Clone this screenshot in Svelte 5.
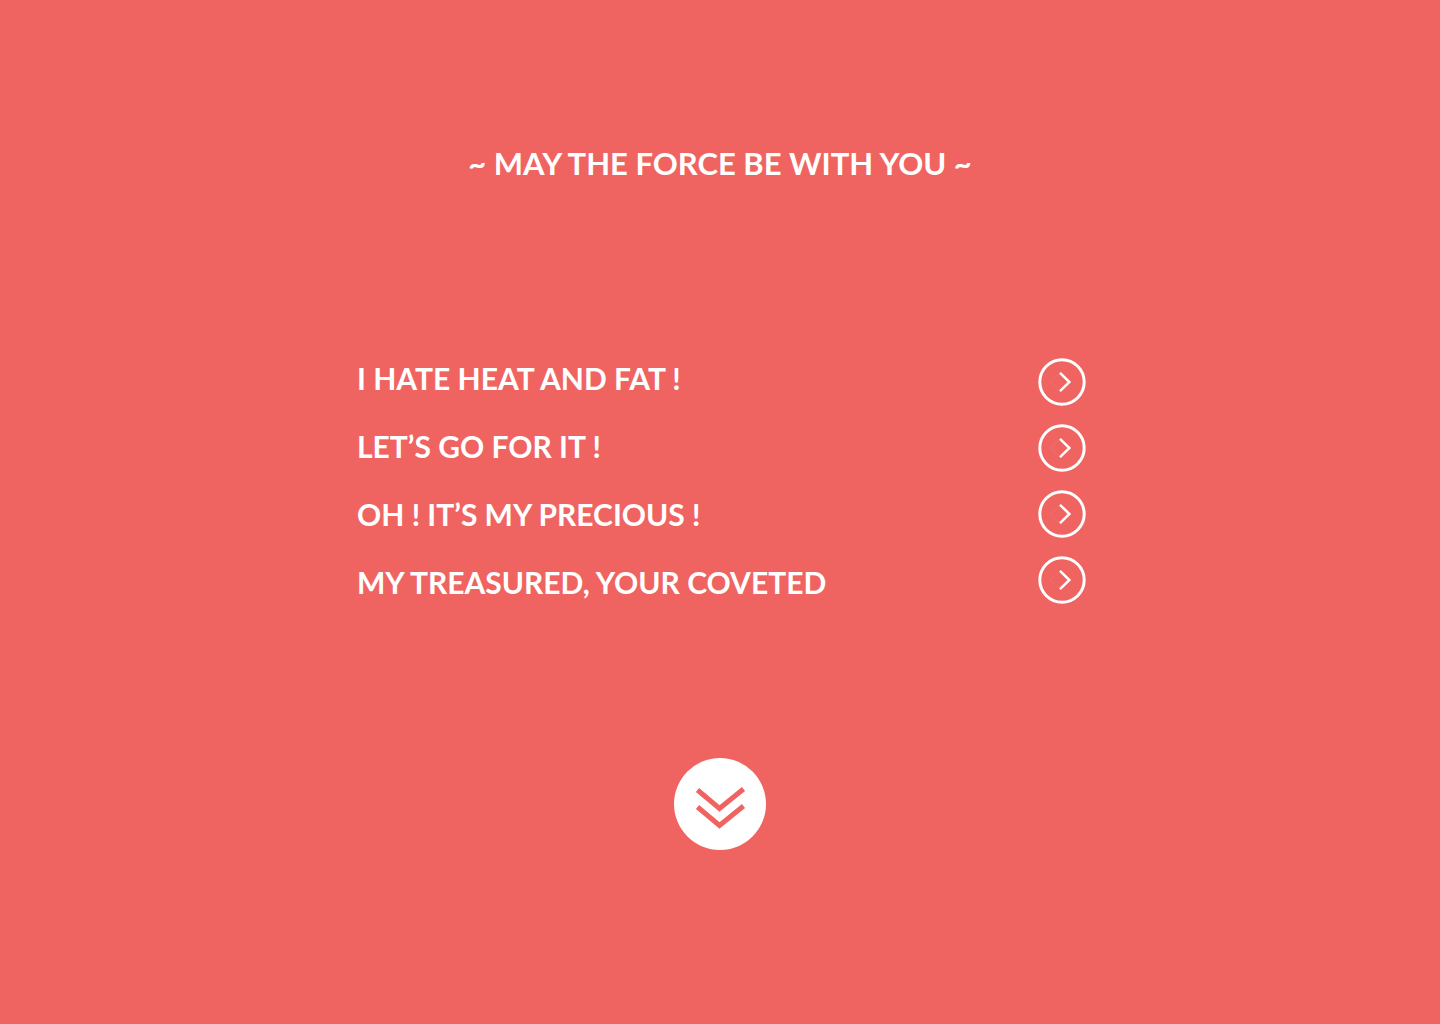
<script>
  const phrases = [
    'I HATE HEAT AND FAT !',
    'LET’S GO FOR IT !',
    'OH ! IT’S MY PRECIOUS !',
    'MY TREASURED, YOUR COVETED'
  ];
</script>

<main>
  <h1>~ MAY THE FORCE BE WITH YOU ~</h1>
  <section>
    <ul class="phrases">
      {#each phrases as phrase, i}
        <li id="phrase-{i}">{phrase}</li>
      {/each}
    </ul>
    <ul class="actions">
      {#each phrases as phrase, i}
        <li>
          <button class="go" aria-labelledby="phrase-{i}">
            <svg viewBox="0 0 48 48" aria-hidden="true">
              <circle cx="24" cy="24" r="22.2" />
              <path class="faint" d="M22 14.5L12.500 24l9.500 9.500" />
              <path class="arrow" d="M22 14.800l9.400 9.200-9.400 9.200" />
            </svg>
          </button>
        </li>
      {/each}
    </ul>
  </section>
  <button class="down" aria-label="Scroll down">
    <svg viewBox="0 0 92 92" aria-hidden="true">
      <path d="M23.500 32l22 18.500 24-19.500M23.500 49l22 18.500 24-19.500" />
    </svg>
  </button>
</main>

<style>
  :global(body) {
    margin: 0;
    background: #ef6461;
  }
  main {
    box-sizing: border-box;
    min-height: 100vh;
    padding: 143px 24px;
    display: flex;
    flex-direction: column;
    align-items: center;
    color: #fff;
    font-family: Lato, sans-serif;
    font-weight: 700;
    font-size: 30px;
    line-height: 40px;
  }
  h1 {
    margin: 0;
    font: inherit;
    font-size: 31px;
  }
  section {
    box-sizing: border-box;
    width: 100%;
    max-width: 732px;
    margin: 175px 0 154px;
    padding-left: 3px;
    display: flex;
    justify-content: space-between;
  }
  ul {
    margin: 0;
    padding: 0;
    list-style: none;
    display: flex;
    flex-direction: column;
  }
  .phrases {
    gap: 28px;
  }
  .actions {
    gap: 18px;
  }
  button {
    display: block;
    padding: 0;
    border: 0;
    border-radius: 50%;
    flex: none;
    cursor: pointer;
  }
  svg {
    display: block;
    width: 100%;
    height: 100%;
    fill: none;
  }
  .go {
    width: 48px;
    height: 48px;
    background: none;
    color: #fff;
  }
  .go svg {
    stroke: currentColor;
    stroke-width: 3;
  }
  .go .arrow {
    stroke-width: 2.5;
  }
  .go .faint {
    stroke-width: 1;
    opacity: 0.08;
  }
  .down {
    width: 92px;
    height: 92px;
    background: #fff;
    color: #ef6461;
  }
  .down svg {
    stroke: currentColor;
    stroke-width: 5;
  }
</style>
